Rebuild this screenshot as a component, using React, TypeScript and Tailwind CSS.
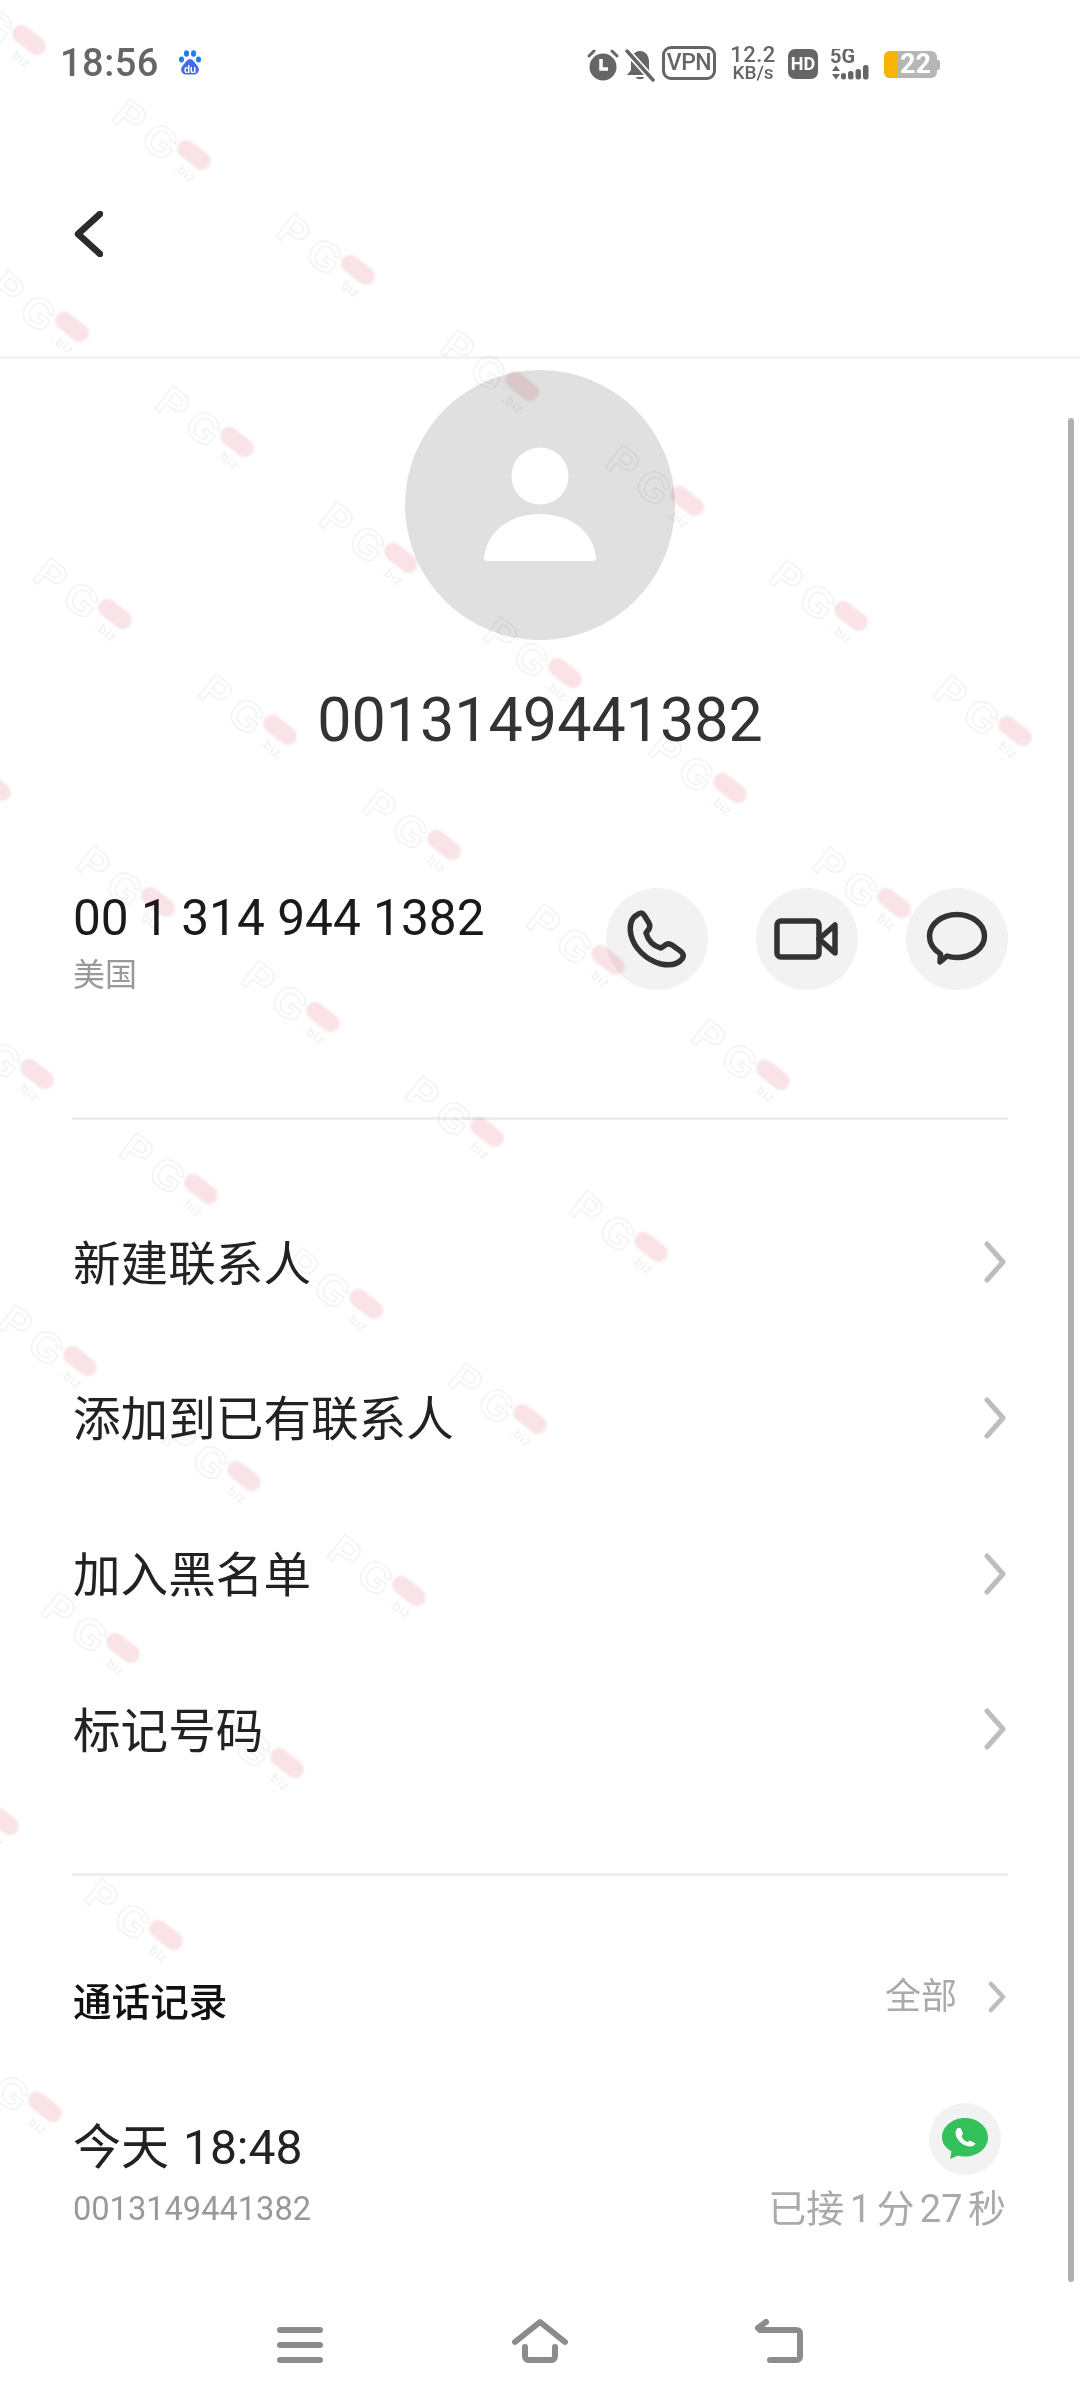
import React from "react";

const lattice: { x: number; y: number; key: string }[] = [];
for (let m = 0; m <= 8; m++) {
  for (let k = -4; k + m <= 5; k++) {
    const x = (126 + 107 * k + 28 * m) * 1.536;
    const y = (101 + 75 * k + 187 * m) * 1.536;
    if (x > -30 && y > -30 && x < 1110) lattice.push({ x, y, key: `${k}_${m}` });
  }
}

function Watermark({ x, y }: { x: number; y: number }) {
  return (
    <div className="absolute w-0 h-0 rotate-[38deg]" style={{ left: x, top: y }}>
      <div className="absolute left-[-19px] top-[-9px] w-[38px] h-[18px] rounded-full bg-[#eca3ab] opacity-30 blur-[1px]" />
      <div className="absolute left-[-88px] top-[-12px] w-[90px] h-[44px] leading-[44px] text-[42px] font-bold tracking-[9px] text-transparent [-webkit-text-stroke:1.5px_#f3f3f3] font-['Liberation_Sans',sans-serif]">
        PG
      </div>
      <div className="absolute left-[-8px] top-[12px] text-[13px] leading-[16px] tracking-[1px] text-[#eeeeee] font-['Liberation_Sans',sans-serif]">
        .biz
      </div>
    </div>
  );
}

function Chevron() {
  return (
    <svg className="mb-[5px]" width="24" height="42" viewBox="0 0 24 42" fill="none">
      <path d="M4 3 L20 21 L4 39" stroke="#bdbdbd" strokeWidth="5" strokeLinecap="round" strokeLinejoin="round" />
    </svg>
  );
}

function ActionCircle({ children }: { children: React.ReactNode }) {
  return <div className="w-[102px] h-[102px] rounded-full bg-[#f2f2f2]">{children}</div>;
}

function Row({ label }: { label: string }) {
  return (
    <div className="h-[155.67px] flex items-center justify-between pr-[1px]">
      <span className="text-[47.6px] leading-[60px] text-[#222222]">{label}</span>
      <Chevron />
    </div>
  );
}

function Divider() {
  return <div className="h-[3px] bg-[#eeeeec]" />;
}

function StatusBar() {
  return (
    <div className="h-[126px] relative">
      <div className="flex items-center pl-[60px] pt-[43px] h-[40px]">
        <span className="text-[38px] leading-[40px] font-medium text-[#666666] tracking-[0.5px] mt-[40px]">18:56</span>
        <svg className="ml-[19px] mt-[40px]" width="24" height="26" viewBox="0 0 24 26">
          <ellipse cx="8.5" cy="3.5" rx="2.5" ry="3.2" fill="#1a7df0" />
          <ellipse cx="15.5" cy="3.5" rx="2.5" ry="3.2" fill="#1a7df0" />
          <ellipse cx="3.5" cy="9.5" rx="2.5" ry="3" fill="#1a7df0" />
          <ellipse cx="20.5" cy="9.5" rx="2.5" ry="3" fill="#1a7df0" />
          <path d="M12 9 C9 9 7 13 4.5 16 C2 19 3 24.5 8 24.5 H16 C21 24.5 22 19 19.5 16 C17 13 15 9 12 9 Z" fill="#4a68e8" />
          <text x="12" y="23" textAnchor="middle" fontSize="10" fontWeight="700" fill="#ffffff" fontFamily="Liberation Sans">du</text>
        </svg>
      </div>
      <div className="absolute left-[586px] top-[46px] flex items-start text-[#666666]">
        <svg width="34" height="34" viewBox="0 0 34 34" className="mt-[2px]">
          <circle cx="17" cy="19" r="13.5" fill="#666666" />
          <path d="M15 11 V21 H22" stroke="#fff" strokeWidth="3.5" fill="none" />
          <path d="M3 8 L8 3 M31 8 L26 3" stroke="#666666" strokeWidth="3" strokeLinecap="round" />
        </svg>
        <svg width="30" height="34" viewBox="0 0 30 34" className="ml-[5px] mt-[2px]">
          <path d="M15 3 C9 3 6 8 6 14 V22 L2 27 H27 L24 22 V14 C24 8 21 3 15 3 Z M11 29 H19 C19 32 11 32 11 29 Z" fill="#666666" />
          <path d="M1 2 L29 33" stroke="#ffffff" strokeWidth="7" />
          <path d="M2 3 L28 32" stroke="#666666" strokeWidth="3.5" strokeLinecap="round" />
        </svg>
        <div className="ml-[7px] w-[54px] h-[34px] rounded-[9px] border-[3px] border-[#666666] flex items-center justify-center text-[23px] leading-[28px] font-medium tracking-[-0.5px]">
          VPN
        </div>
        <div className="ml-[15px] w-[44px] flex flex-col items-center font-medium">
          <span className="text-[22px] leading-[18px] tracking-[0.5px]">12.2</span>
          <span className="text-[19px] leading-[17px]">KB/s</span>
        </div>
        <div className="ml-[13px] mt-[3px] w-[30px] h-[30px] rounded-[7px] bg-[#666666] flex items-center justify-center text-[#ffffff] text-[18px] leading-[30px] font-bold">
          HD
        </div>
        <svg width="46" height="32" viewBox="0 0 46 32" className="ml-[12px] mt-[3px]">
          <text x="0" y="14" fontSize="20" fontWeight="700" fill="#666666" fontFamily="Roboto">5G</text>
          <path d="M2 22 L6 16.5 L10 22 Z M2 25 L10 25 L6 30.5 Z" fill="#666666" />
          <rect x="11" y="24" width="5" height="6.5" rx="2.5" fill="#666666" />
          <rect x="18" y="22" width="5.5" height="8.5" rx="2.5" fill="#666666" />
          <rect x="25.5" y="20" width="5.5" height="10.5" rx="2.5" fill="#666666" />
          <rect x="33" y="16" width="5.5" height="14.5" rx="2.5" fill="#666666" />
        </svg>
        <div className="ml-[8px] mt-[5px] flex items-center">
          <div className="relative w-[53px] h-[27px] rounded-[6px] bg-[#b6b6b6] overflow-hidden flex items-center justify-center text-[#ffffff] text-[27px] leading-[27px] font-bold pl-[10px]">
            <div className="absolute left-0 top-0 bottom-0 w-[13px] bg-[#f7b500]" />
            <span className="relative">22</span>
          </div>
          <div className="w-[3px] h-[10px] rounded-r-[2px] bg-[#b6b6b6]" />
        </div>
      </div>
    </div>
  );
}

export default function App() {
  return (
    <div className="relative w-[1080px] h-[2408px] overflow-hidden bg-white font-['Roboto','Noto_Sans_CJK_SC',sans-serif]">
      <StatusBar />

      <div className="h-[230px] pt-[85px] pl-[73px]">
        <svg width="30" height="46" viewBox="0 0 30 46" fill="none">
          <path d="M27 3 L5 23 L27 43" stroke="#2b2b2b" strokeWidth="6.5" strokeLinecap="round" strokeLinejoin="round" />
        </svg>
      </div>
      <div className="h-[3px] bg-[#f3f3f3]" />

      <div className="mt-[11px] mx-auto w-[270px] h-[270px] rounded-full bg-[#e0e0e0]">
        <svg width="270" height="270" viewBox="0 0 270 270">
          <circle cx="135" cy="106" r="28.5" fill="#ffffff" />
          <path d="M79 188 C82 160 106 144 135 144 C164 144 188 160 191 188 C191 190 190 191 188 191 H82 C80 191 79 190 79 188 Z" fill="#ffffff" />
        </svg>
      </div>

      <div className="mt-[40px] h-[80px] text-center text-[61px] leading-[80px] text-[#333333]">0013149441382</div>

      <div className="mt-[128px] h-[102px] pl-[73px] pr-[72px] flex justify-between items-start">
        <div>
          <div className="text-[49.6px] leading-[60px] text-[#1a1a1a]">00 1 314 944 1382</div>
          <div className="mt-[7px] text-[32px] leading-[40px] text-[#999999]">美国</div>
        </div>
        <div className="flex gap-[48px]">
          <ActionCircle>
            <svg width="102" height="102" viewBox="0 0 102 102" fill="none">
              <path d="M31 27 C25 30 23 38 25 47 C28 60 40 72 55 76 C65 78 72 76 76 71 C79 67 76 64 73 62 L66 57 C63 55 60 56 58 58 L55 60 C47 58 42 52 40 45 L43 41 C44 39 44 37 43 35 L38 27 C36 24 33 25 31 27 Z" stroke="#333333" strokeWidth="5.5" strokeLinejoin="round" />
            </svg>
          </ActionCircle>
          <ActionCircle>
            <svg width="102" height="102" viewBox="0 0 102 102" fill="none">
              <rect x="21" y="33" width="42" height="36" rx="4" stroke="#333333" strokeWidth="5.5" />
              <path d="M63 51 L79 37 V65 Z" stroke="#333333" strokeWidth="5.5" strokeLinejoin="round" />
            </svg>
          </ActionCircle>
          <ActionCircle>
            <svg width="102" height="102" viewBox="0 0 102 102" fill="none">
              <path d="M34 74 L34.5 66 C27.5 61.5 23.5 55 23.5 48 C23.5 36 36 26.5 51 26.5 C66 26.5 78.5 36 78.5 48 C78.5 60 66 69.5 51 69.5 C47.5 69.5 44 69 41 68 Z" stroke="#333333" strokeWidth="5.5" strokeLinejoin="round" />
            </svg>
          </ActionCircle>
        </div>
      </div>

      <div className="mt-[127px] mx-[72px]">
        <Divider />
      </div>

      <div className="mt-[67px] ml-[73px] mr-[72px]">
        <Row label="新建联系人" />
        <Row label="添加到已有联系人" />
        <Row label="加入黑名单" />
        <Row label="标记号码" />
      </div>

      <div className="mt-[63px] mx-[72px]">
        <Divider />
      </div>

      <div className="mt-[100px] ml-[73px] mr-[72px] flex justify-between items-start h-[54px]">
        <span className="text-[38.6px] leading-[54px] text-[#111111] font-medium">通话记录</span>
        <div className="flex items-center h-[42px]">
          <span className="text-[36px] leading-[42px] text-[#aaaaaa]">全部</span>
          <svg className="ml-[30px] mr-[1px]" width="20" height="32" viewBox="0 0 20 32" fill="none">
            <path d="M4 3 L16 16 L4 29" stroke="#bdbdbd" strokeWidth="4.5" strokeLinecap="round" strokeLinejoin="round" />
          </svg>
        </div>
      </div>

      <div className="mt-[73px] ml-[73px] mr-[74px] flex justify-between items-start">
        <div className="pt-[15px]">
          <div className="text-[48px] leading-[60px] text-[#222222] [word-spacing:2px]">今天 18:48</div>
          <div className="mt-[9px] text-[32.6px] leading-[44px] text-[#999999]">0013149441382</div>
        </div>
        <div className="flex flex-col items-end">
          <div className="mr-[5px] w-[72px] h-[72px] rounded-full bg-[#f2f2f2]">
            <svg width="72" height="72" viewBox="0 0 72 72">
              <path d="M36 15 C48.5 15 59 23.5 59 34.5 C59 45.5 48.5 53.5 36 53.5 C33.5 53.5 31 53.2 29 52.5 L21 56 L22.5 48.5 C16.5 45 13 40 13 34.5 C13 23.5 23.5 15 36 15 Z" fill="#34c05a" />
              <path d="M29 25 C26 27 26 31 28 35 C30.5 39.5 36 43.5 41 43.5 C44 43.5 46 42 46.5 40.5 L41 37.5 L38.5 39 C35.5 38 33 35 32.5 33 L34 30.5 L31.5 25 Z" fill="#ffffff" />
            </svg>
          </div>
          <div className="mt-[9px] text-[38px] leading-[50px] text-[#aaaaaa] [word-spacing:-4px]">已接 1 分 27 秒</div>
        </div>
      </div>

      <div className="absolute left-0 right-0 top-[2318px] grid grid-cols-3 px-[180px]">
        <div className="flex justify-center">
          <svg width="60" height="48" viewBox="0 0 60 48" fill="none" stroke="#8c8c8c" strokeWidth="6" strokeLinecap="round">
            <path d="M10 12 H50 M10 27 H50 M10 42 H50" />
          </svg>
        </div>
        <div className="flex justify-center">
          <svg width="60" height="48" viewBox="0 0 60 48" fill="none" stroke="#8c8c8c" strokeWidth="6" strokeLinecap="round" strokeLinejoin="round">
            <path d="M5 24 L30 4 L55 24" />
            <path d="M15 29 V38 C15 41 17 42 19 42 H41 C43 42 45 41 45 38 V29" />
          </svg>
        </div>
        <div className="flex justify-center">
          <svg width="60" height="48" viewBox="0 0 60 48" fill="none" stroke="#8c8c8c" strokeWidth="6" strokeLinecap="round" strokeLinejoin="round">
            <path d="M16 4 L8 10 L10 12 H46 C49 12 50 13 50 16 V38 C50 41 49 42 46 42 H20" />
          </svg>
        </div>
      </div>

      <div className="absolute left-[1068px] top-[418px] w-[6px] h-[1864px] rounded-full bg-[#b0b0b0]" />

      <div className="absolute inset-0 pointer-events-none mix-blend-multiply">
        {lattice.map((p) => (
          <Watermark key={p.key} x={p.x} y={p.y} />
        ))}
      </div>
    </div>
  );
}
